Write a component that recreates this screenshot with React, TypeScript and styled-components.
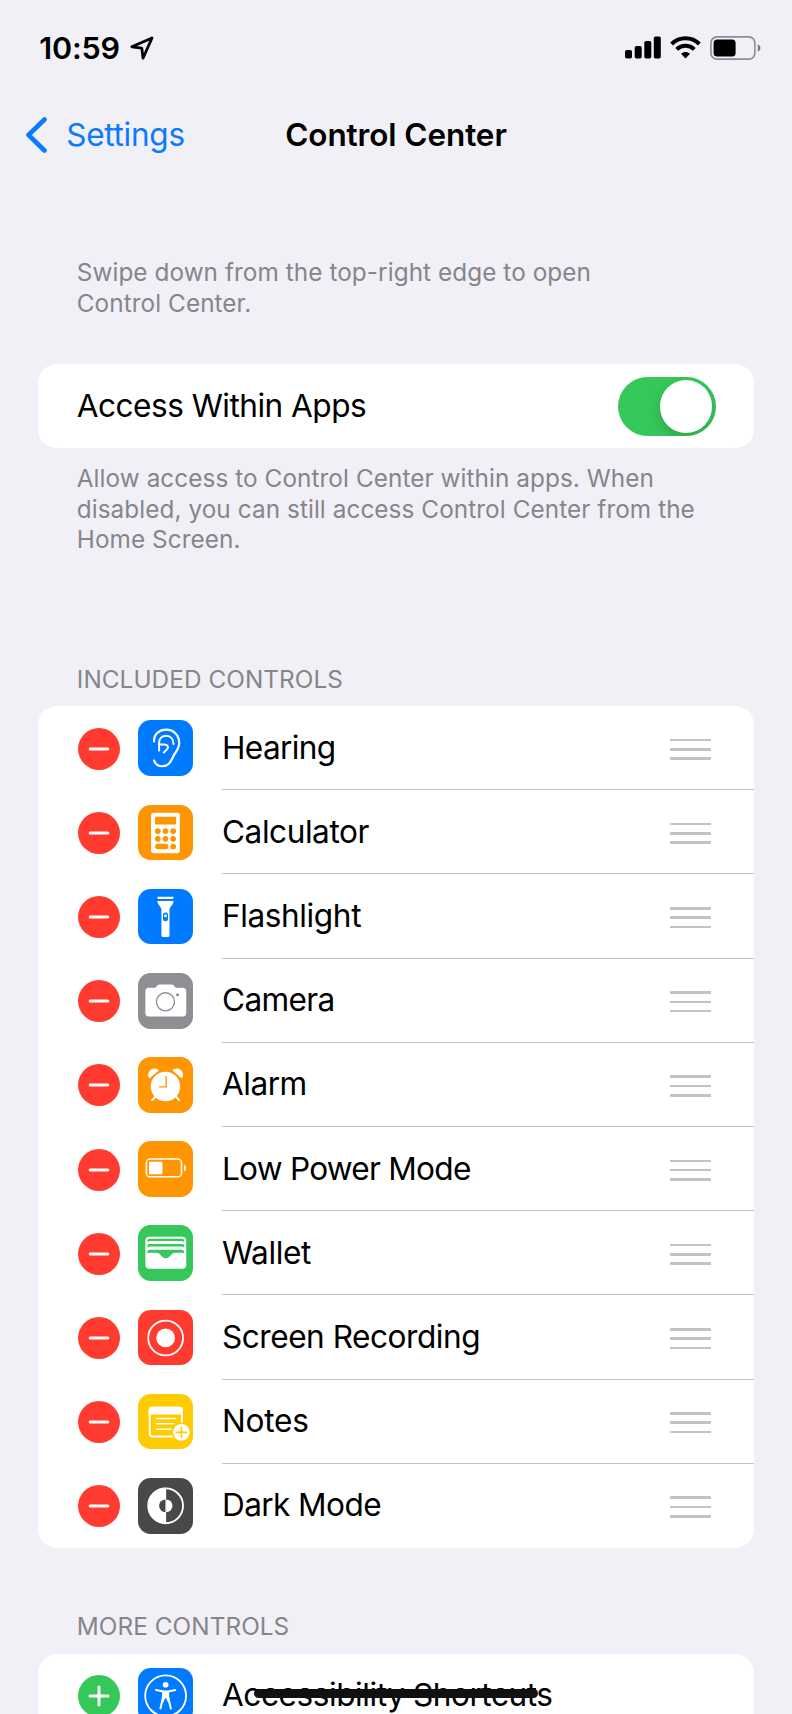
import React from "react";
import styled, { createGlobalStyle } from "styled-components";

const GlobalStyle = createGlobalStyle`
  * { box-sizing: border-box; }
  html, body { margin: 0; background: #f1f0f6; }
  body { height: 1714px; overflow: hidden; }
`;

const Screen = styled.div`
  position: relative;
  width: 792px;
  height: 1714px;
  overflow: hidden;
  background: #f1f0f6;
  color: #000;
  font-family: Inter, "Liberation Sans", sans-serif;
`;

const StatusBar = styled.header`
  display: flex;
  align-items: center;
  justify-content: space-between;
  height: 95px;
  padding: 0 31.5px 0 39.3px;
`;

const StatusGroup = styled.div<{ $gap: number }>`
  display: flex;
  align-items: center;
  gap: ${(p) => p.$gap}px;
`;

const Clock = styled.span`
  font-size: 30.5px;
  line-height: 36px;
  font-weight: 600;
  letter-spacing: -0.15px;
`;

const NavBar = styled.nav`
  display: grid;
  grid-template-columns: 1fr auto 1fr;
  align-items: center;
  height: 79px;
  padding: 0 25px;
`;

const BackLink = styled.a`
  display: flex;
  align-items: center;
  gap: 17.2px;
  color: #0a7aff;
  font-size: 31.5px;
  line-height: 38px;
  letter-spacing: -0.25px;
`;

const Title = styled.h1`
  margin: 0;
  font-size: 31.5px;
  line-height: 38px;
  font-weight: 600;
  letter-spacing: -0.1px;
`;

const Content = styled.main`
  display: flex;
  flex-direction: column;
  padding: 83px 38.4px 0;
`;

const Note = styled.p<{ $top?: number }>`
  margin: ${(p) => p.$top ?? 0}px 0 0;
  padding: 0 38.4px;
  color: #85858b;
  font-size: 24.3px;
  line-height: 30.6px;
  letter-spacing: 0.08px;
  white-space: nowrap;
`;

const SectionTitle = styled.h2<{ $top: number }>`
  margin: ${(p) => p.$top}px 0 12.3px;
  padding: 0 38.4px;
  color: #85858b;
  font-size: 24.3px;
  line-height: 30px;
  font-weight: 400;
  letter-spacing: 0.08px;
`;

const Card = styled.section<{ $top?: number }>`
  margin-top: ${(p) => p.$top ?? 0}px;
  border-radius: 19px;
  background: #fff;
  overflow: hidden;
`;

const ToggleRow = styled.div`
  display: flex;
  align-items: center;
  justify-content: space-between;
  height: 84.3px;
  padding: 0 38px 0 38.4px;
`;

const Label = styled.span<{ $tracking: number }>`
  font-size: 31.6px;
  line-height: 38px;
  letter-spacing: ${(p) => p.$tracking}px;
  white-space: nowrap;
`;

const Switch = styled.button`
  display: flex;
  justify-content: flex-end;
  width: 98px;
  height: 59.4px;
  padding: 3.5px;
  border: 0;
  border-radius: 30px;
  background: #35c759;
  overflow: hidden;
`;

const Knob = styled.span`
  width: 52.4px;
  height: 52.4px;
  border-radius: 50%;
  background: #fff;
  box-shadow: 0 5px 12px rgba(0, 0, 0, 0.16);
`;

const ControlRow = styled.div`
  display: flex;
  align-items: center;
  height: 84.2px;
  padding-left: 39.8px;
`;

const RoundButton = styled.button<{ $color: string }>`
  display: grid;
  place-items: center;
  flex: none;
  width: 42px;
  height: 42px;
  margin-top: 1px;
  padding: 0;
  border: 0;
  border-radius: 50%;
  background: ${(p) => p.$color};
`;

const IconTile = styled.span<{ $color: string }>`
  flex: none;
  width: 55.6px;
  height: 55.6px;
  margin-left: 17.5px;
  border-radius: 12.5px;
  background: ${(p) => p.$color};

  svg {
    display: block;
    width: 100%;
    height: 100%;
  }
`;

const RowBody = styled.div<{ $line: boolean }>`
  display: flex;
  flex: 1;
  align-items: center;
  justify-content: space-between;
  align-self: stretch;
  margin-left: 28.7px;
  padding-right: 43px;
  border-bottom: 1px solid ${(p) => (p.$line ? "#c2c2c5" : "transparent")};
`;

const Handle = styled.span`
  display: flex;
  flex-direction: column;
  gap: 6.7px;
  width: 41px;
  margin-top: 3.2px;

  i {
    height: 2.6px;
    background: #c3c3c6;
  }
`;

const HomeIndicator = styled.div`
  position: absolute;
  left: 254px;
  bottom: 16px;
  width: 284px;
  height: 9px;
  border-radius: 5px;
  background: #111113;
`;

const line = { fill: "none", stroke: "#fff", strokeLinecap: "round", strokeLinejoin: "round" } as const;

const HearingIcon = () => (
  <svg viewBox="0 0 166 166" {...line} strokeWidth="6.500">
    <path d="M48 64C47 42 64 29 84 29C107 29 123 46 123 68C123 84 116 92 109 102C101 114 98 137 72 138C60 138 51 131 48 121" />
    <path d="M63 91V68C63 55 72 47 84 47C97 47 106 57 106 72" strokeWidth="6" />
    <path d="M63 73H78C89 73 92 81 87 87L77 97" strokeWidth="6" />
  </svg>
);

const CalculatorIcon = () => (
  <svg viewBox="0 0 166 166">
    <rect x="39" y="23" width="86" height="121" rx="8" fill="#fff" />
    <g fill="#ff9500">
      <rect x="51" y="35" width="63" height="23" rx="2" />
      {[78, 101].map((y) => [59, 82, 105].map((x) => <circle key={`${x}-${y}`} cx={x} cy={y} r="8.5" />))}
      <rect x="51" y="116" width="40" height="16" rx="8" />
      <circle cx="105" cy="124" r="8.5" />
    </g>
  </svg>
);

const FlashlightIcon = () => (
  <svg viewBox="0 0 166 166" fill="#fff">
    <path d="M58 23H106V26C106 29 104 30 102 30H62C60 30 58 29 58 26Z" />
    <path d="M58 36H106C106 49 94 52 94 64V139Q94 143 90 143H74Q70 143 70 139V64C70 52 58 49 58 36Z" />
    <rect x="74.5" y="70" width="15" height="26" rx="7.5" fill="#007aff" />
    <circle cx="82" cy="80" r="4.5" />
  </svg>
);

const CameraIcon = () => (
  <svg viewBox="0 0 166 166">
    <path d="M32 44H50C55 44 57 34 64 34H101C108 34 110 44 115 44H134Q144 44 144 55V119Q144 130 134 130H32Q22 130 22 119V55Q22 44 32 44Z" fill="#fff" />
    <circle cx="82" cy="86" r="27" fill="none" stroke="#8e8e93" strokeWidth="4" />
    <circle cx="118" cy="65" r="4.5" fill="#8e8e93" />
  </svg>
);

const AlarmIcon = () => (
  <svg viewBox="0 0 166 166" fill="#fff">
    <circle cx="82" cy="88" r="44" />
    <path d="M34 64C25 51 34 34 50 34C56 34 61 37 62 40Z" />
    <path d="M131 64C140 51 131 34 115 34C109 34 104 37 103 40Z" />
    <path d="M53 117L42 129M112 117L123 129" {...line} strokeWidth="6" />
    <path d="M84 57V89H63" fill="none" stroke="#ff9500" strokeWidth="4" />
  </svg>
);

const LowPowerIcon = () => (
  <svg viewBox="0 0 166 166" fill="#fff">
    <rect x="25" y="54" width="105" height="53" rx="11" fill="none" stroke="#fff" strokeWidth="4.5" />
    <rect x="33" y="62" width="40" height="37" rx="3" />
    <path d="M138 70C145 73 145 88 138 91Z" />
  </svg>
);

const WalletIcon = () => (
  <svg viewBox="0 0 166 166">
    <rect x="22" y="35" width="122" height="96" rx="12" fill="#fff" />
    <g fill="#35c759">
      <path d="M28 51C28 42 31 41 37 41H129C135 41 138 42 138 51C134 48 132 48 128 48H38C34 48 32 48 28 51Z" />
      <path d="M28 67C28 58 31 57 37 57H129C135 57 138 58 138 67C134 64 132 64 128 64H38C34 64 32 64 28 67Z" />
      <path d="M28 85C28 76 31 74 37 74H129C135 74 138 76 138 85C134 83 132 83 128 83H111C98 83 97 99 83 99C69 99 68 83 55 83H38C34 83 32 83 28 85Z" />
    </g>
  </svg>
);

const RecordIcon = () => (
  <svg viewBox="0 0 166 166">
    <circle cx="82.5" cy="83.5" r="52" fill="none" stroke="#fff" strokeWidth="5.500" />
    <circle cx="82.5" cy="83.5" r="28" fill="#fff" />
  </svg>
);

const NotesIcon = () => (
  <svg viewBox="0 0 166 166">
    <rect x="35" y="41" width="96" height="86" rx="9" {...line} strokeWidth="6" />
    <path d="M32 61V48Q32 38 42 38H124Q134 38 134 48V61Z" fill="#fff" />
    <path d="M55 73H112M55 89H106M55 105H98" {...line} strokeWidth="4.500" />
    <circle cx="129.500" cy="114.500" r="29" fill="#ffcc02" />
    <circle cx="129.500" cy="114.500" r="25" fill="#fff" />
    <path d="M115 114.500H144M129.500 100V129" fill="none" stroke="#ffcc02" strokeWidth="5" strokeLinecap="round" />
  </svg>
);

const DarkModeIcon = () => (
  <svg viewBox="0 0 166 166">
    <circle cx="82.5" cy="83" r="52" fill="none" stroke="#fff" strokeWidth="5.500" />
    <path d="M84 29A54 54 0 0 0 84 137Z" fill="#fff" />
    <path d="M82 64A19 19 0 0 0 82 102Z" fill="#48484a" />
    <path d="M84 64A19 19 0 0 1 84 102Z" fill="#fff" />
  </svg>
);

const AccessibilityIcon = () => (
  <svg viewBox="0 0 166 166">
    <circle cx="82.5" cy="83" r="61" fill="none" stroke="#fff" strokeWidth="5.500" />
    <circle cx="82.5" cy="50" r="8.5" fill="#fff" />
    <path d="M54 66L75 70V86L67 121M111 66L90 70V86L98 121" {...line} strokeWidth="6" />
    <path d="M73 67H92V86L96 104H90L84 90H81L75 104H69L73 86Z" fill="#fff" />
  </svg>
);

const LocationIcon = () => (
  <svg width="24" height="24" viewBox="0 0 24 24" fill="none" stroke="#000" strokeWidth="2.800" strokeLinejoin="round">
    <path d="M22 2L1.800 10.800L11.800 12.200L13 22.200Z" />
  </svg>
);

const BackIcon = () => (
  <svg width="24" height="36" viewBox="0 0 24 36" fill="none" stroke="#0a7aff" strokeWidth="4.600" strokeLinecap="round" strokeLinejoin="round">
    <path d="M19.500 2.500L3.500 18L19.500 33.500" />
  </svg>
);

const SignalIcon = () => (
  <svg width="36" height="23" viewBox="0 0 36 23">
    <rect x="0" y="14" width="7" height="8.500" rx="1.800" />
    <rect x="9.700" y="10" width="7" height="12.500" rx="1.800" />
    <rect x="19.300" y="5" width="7" height="17.500" rx="1.800" />
    <rect x="28.800" y="0.500" width="7" height="22" rx="1.800" />
  </svg>
);

const WifiIcon = () => (
  <svg width="31" height="23" viewBox="0 0 31 23" fill="none" stroke="#000" strokeWidth="4">
    <path d="M1.600 8A19.500 19.500 0 0 1 29.400 8" />
    <path d="M6.700 13.300A12.500 12.500 0 0 1 24.300 13.300" />
    <path d="M11 17.700C13.500 15.400 17.500 15.400 20 17.700L15.500 22.500Z" fill="#000" stroke="none" />
  </svg>
);

const BatteryIcon = () => (
  <svg width="51" height="24" viewBox="0 0 51 24">
    <rect x="0.900" y="0.900" width="44" height="22.200" rx="6" fill="none" stroke="#8d8c91" strokeWidth="1.600" />
    <rect x="3.600" y="3.600" width="22" height="16.800" rx="3.500" />
    <path d="M47.800 8.500C51.300 9.500 51.300 14.500 47.800 15.500Z" fill="#77767b" />
  </svg>
);

const MinusGlyph = () => (
  <svg width="22" height="22" viewBox="0 0 22 22" {...line} strokeWidth="3">
    <path d="M2.200 11H19.800" />
  </svg>
);

const PlusGlyph = () => (
  <svg width="22" height="22" viewBox="0 0 22 22" {...line} strokeWidth="3">
    <path d="M2 11H20M11 2V20" />
  </svg>
);

const included = [
  { label: "Hearing", tracking: -0.65, color: "#007aff", Icon: HearingIcon },
  { label: "Calculator", tracking: -0.45, color: "#ff9500", Icon: CalculatorIcon },
  { label: "Flashlight", tracking: -0.4, color: "#007aff", Icon: FlashlightIcon },
  { label: "Camera", tracking: -0.65, color: "#8e8e93", Icon: CameraIcon },
  { label: "Alarm", tracking: -0.5, color: "#ff9500", Icon: AlarmIcon },
  { label: "Low Power Mode", tracking: -0.75, color: "#ff9500", Icon: LowPowerIcon },
  { label: "Wallet", tracking: -0.4, color: "#35c759", Icon: WalletIcon },
  { label: "Screen Recording", tracking: -0.48, color: "#ff3b30", Icon: RecordIcon },
  { label: "Notes", tracking: -0.25, color: "#ffcc02", Icon: NotesIcon },
  { label: "Dark Mode", tracking: -0.6, color: "#48484a", Icon: DarkModeIcon },
];

export default function App() {
  return (
    <>
      <GlobalStyle />
      <Screen>
        <StatusBar>
          <StatusGroup $gap={10.5}>
            <Clock>10:59</Clock>
            <LocationIcon />
          </StatusGroup>
          <StatusGroup $gap={9}>
            <SignalIcon />
            <WifiIcon />
            <BatteryIcon />
          </StatusGroup>
        </StatusBar>
        <NavBar>
          <BackLink>
            <BackIcon />
            Settings
          </BackLink>
          <Title>Control Center</Title>
        </NavBar>
        <Content>
          <Note>
            Swipe down from the top-right edge to open
            <br />
            Control Center.
          </Note>
          <Card $top={46}>
            <ToggleRow>
              <Label $tracking={-0.52}>Access Within Apps</Label>
              <Switch role="switch" aria-checked="true">
                <Knob />
              </Switch>
            </ToggleRow>
          </Card>
          <Note $top={14.5}>
            Allow access to Control Center within apps. When
            <br />
            disabled, you can still access Control Center from the
            <br />
            Home Screen.
          </Note>
          <SectionTitle $top={109}>INCLUDED CONTROLS</SectionTitle>
          <Card>
            {included.map(({ label, tracking, color, Icon }, index) => (
              <ControlRow key={label}>
                <RoundButton $color="#ff3b30">
                  <MinusGlyph />
                </RoundButton>
                <IconTile $color={color}>
                  <Icon />
                </IconTile>
                <RowBody $line={index < included.length - 1}>
                  <Label $tracking={tracking}>{label}</Label>
                  <Handle>
                    <i />
                    <i />
                    <i />
                  </Handle>
                </RowBody>
              </ControlRow>
            ))}
          </Card>
          <SectionTitle $top={63.3}>MORE CONTROLS</SectionTitle>
          <Card>
            <ControlRow>
              <RoundButton $color="#35c759">
                <PlusGlyph />
              </RoundButton>
              <IconTile $color="#007aff">
                <AccessibilityIcon />
              </IconTile>
              <RowBody $line={false}>
                <Label $tracking={-0.45}>Accessibility Shortcuts</Label>
              </RowBody>
            </ControlRow>
          </Card>
        </Content>
        <HomeIndicator />
      </Screen>
    </>
  );
}
